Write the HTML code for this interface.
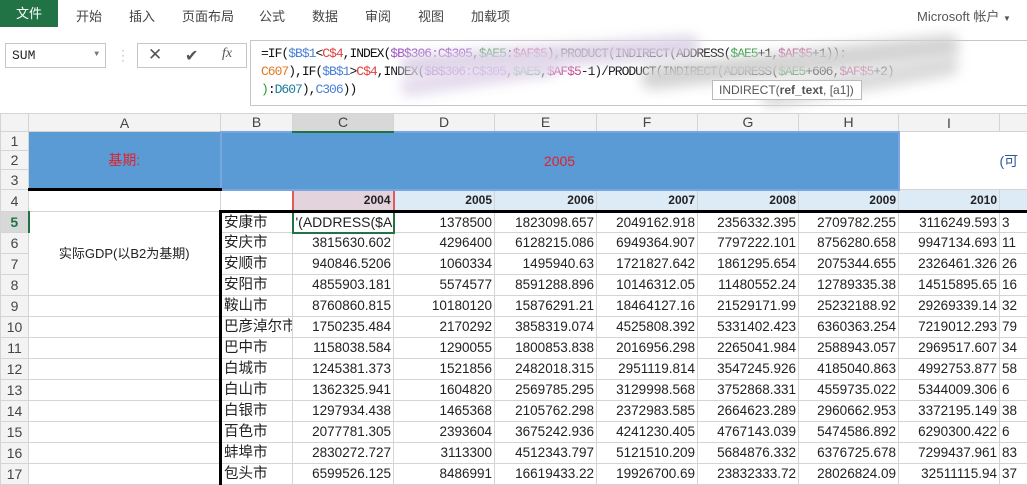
<!DOCTYPE html>
<html><head><meta charset="utf-8"><style>
*{margin:0;padding:0;box-sizing:border-box}
body{width:1027px;height:479px;overflow:hidden;background:#fff;font-family:"Liberation Sans","Noto Sans CJK SC",sans-serif;position:relative}
.tabs{position:absolute;top:0;left:0;width:1027px;height:27px;font-size:13px;color:#444}
.tabs span{position:absolute;top:6px}
.file{position:absolute;left:0;top:0;width:58px;height:27px;background:#217346;color:#fff;font-size:13px;text-align:center;line-height:27px}
.nb{position:absolute;left:5px;top:43px;width:101px;height:25px;border:1px solid #c6c6c6;font-family:"Liberation Mono",monospace;font-size:13px;padding:4px 0 0 6px;color:#222}
.btns{position:absolute;left:137px;top:43px;width:110px;height:25px;border:1px solid #c6c6c6;color:#555}
.fx{position:absolute;left:250px;top:40px;width:780px;height:66px;border:1px solid #c6c6c6;border-right:none}
.fl{position:absolute;left:261px;font-family:"Liberation Mono",monospace;font-size:13px;letter-spacing:-1px;white-space:pre;color:#111}
.b{color:#4a7fd6}.r{color:#e04040}.p{color:#9a4fc0}.g{color:#2a9a3a}.o{color:#e07a20}.m{color:#c0408a}.t{color:#1e7aa0}
.blob{position:absolute;filter:blur(6px);border-radius:20px}
table{position:absolute;left:0;top:113px;border-collapse:collapse;table-layout:fixed;width:1039px}
td{border:1px solid #d4d4d4;font-size:13.5px;line-height:18px;white-space:nowrap;overflow:hidden;text-align:right;padding:0 2px;color:#222;height:21px}
td.h{background:#f3f3f3;color:#444;text-align:center;font-size:14px;padding:0}
tr.ch td{background:#f3f3f3;height:18px;line-height:16px;text-align:center;color:#444;font-size:14px;padding:0}
td.nm{text-align:left;padding-left:2px;font-size:14.5px}
</style></head><body>
<div class="file">文件</div>
<div class="tabs">
<span style="left:76px">开始</span><span style="left:129px">插入</span><span style="left:182px">页面布局</span><span style="left:259px">公式</span><span style="left:312px">数据</span><span style="left:365px">审阅</span><span style="left:418px">视图</span><span style="left:471px">加载项</span>
<span style="left:917px;color:#555">Microsoft 帐户 <span style="font-size:8px;position:static">▼</span></span>
</div>
<div class="nb">SUM<span style="position:absolute;right:6px;top:6px;font-size:8px;color:#777">▼</span></div>
<div style="position:absolute;left:121px;top:48px;color:#aaa;font-size:12px;line-height:5px">·<br>·<br>·</div>
<div class="btns"><span style="position:absolute;left:10px;top:1px;font-size:17px">✕</span><span style="position:absolute;left:47px;top:2px;font-size:16px">✔</span><span style="position:absolute;left:84px;top:2px;font-family:'Liberation Serif',serif;font-style:italic;font-size:14px">fx</span></div>
<div class="fx"></div>
<div class="fl" style="top:46px">=IF(<span class="b">$B$1</span>&lt;<span class="r">C$4</span>,INDEX(<span class="p">$B$306:C$305</span>,<span class="g">$AE5</span>:<span class="m">$AF$5</span>),PRODUCT(INDIRECT(ADDRESS(<span class="g">$AE5</span>+1,<span class="m">$AF$5</span>+1)):</div>
<div class="fl" style="top:64px"><span class="o">C607</span>),IF(<span class="b">$B$1</span>&gt;<span class="r">C$4</span>,INDEX(<span class="p">$B$306:C$305</span>,<span class="g">$AE5</span>,<span class="m">$AF$5</span>-1)/PRODUCT(INDIRECT(ADDRESS(<span class="g">$AE5</span>+606,<span class="m">$AF$5</span>+2)</div>
<div class="fl" style="top:82px"><span class="g">)</span>:<span class="t">D607</span>),<span class="b">C306</span>))</div>
<div class="blob" style="left:400px;top:45px;width:300px;height:22px;background:rgba(220,210,230,.9);transform:rotate(-4deg)"></div>
<div class="blob" style="left:640px;top:50px;width:320px;height:24px;background:rgba(210,210,210,.95);transform:rotate(-6deg)"></div>
<div class="blob" style="left:400px;top:68px;width:160px;height:18px;background:rgba(225,215,235,.9);transform:rotate(-8deg)"></div>
<div class="blob" style="left:760px;top:70px;width:200px;height:22px;background:rgba(215,215,215,.9);transform:rotate(-10deg)"></div>
<div style="position:absolute;left:712px;top:80px;width:150px;height:20px;border:1px solid #bbb;background:#fff;font-size:12px;color:#555;padding:2px 0 0 6px">INDIRECT(<b>ref_text</b>, [a1])</div>
<table>
<colgroup><col style="width:28px"><col style="width:192px"><col style="width:72px"><col style="width:101px"><col style="width:101px"><col style="width:102px"><col style="width:101px"><col style="width:101px"><col style="width:100px"><col style="width:101px"><col style="width:40px"></colgroup>
<tr class="ch"><td></td><td>A</td><td>B</td><td style="background:#d8d8d8;border-bottom:2px solid #217346">C</td><td>D</td><td>E</td><td>F</td><td>G</td><td>H</td><td>I</td><td></td></tr>
<tr><td class="h" style="height:19px">1</td><td rowspan="3" style="background:#5b9bd5;color:#e0202a;text-align:center;border-bottom:3px solid #000;font-size:14px">基期:</td><td colspan="7" rowspan="3" style="background:#5b9bd5;color:#e0202a;text-align:center;border:2px solid #7aa6e0;font-size:14px">2005</td><td rowspan="3" colspan="2" style="color:#2a5a9a;text-align:left;padding-left:100px;font-size:14px">(可</td></tr>
<tr><td class="h" style="height:19px">2</td></tr>
<tr><td class="h" style="height:20px">3</td></tr>
<tr style="font-weight:bold"><td class="h" style="height:22px;font-weight:normal">4</td><td></td><td></td><td style="background:#e3d3dc;border:2px solid #e05a5a;font-weight:bold;font-size:12px">2004</td><td style="background:#ddebf7;font-size:12px;font-weight:bold">2005</td><td style="background:#ddebf7;font-size:12px;font-weight:bold">2006</td><td style="background:#ddebf7;font-size:12px;font-weight:bold">2007</td><td style="background:#ddebf7;font-size:12px;font-weight:bold">2008</td><td style="background:#ddebf7;font-size:12px;font-weight:bold">2009</td><td style="background:#ddebf7;font-size:12px;font-weight:bold">2010</td><td style="background:#ddebf7"></td></tr>
<tr><td class="h" style="background:#d8d8d8;color:#217346;font-weight:bold;border-right:2px solid #217346">5</td><td rowspan="4" style="text-align:center;font-size:13px">实际GDP(以B2为基期)</td><td class="nm" style="border-left:3px solid #000;border-top:3px solid #000">安康市</td><td style="border:2px solid #217346;text-align:left;border-top:3px solid #000;font-size:14px">'(ADDRESS($A</td><td style="border-top:3px solid #000">1378500</td><td style="border-top:3px solid #000">1823098.657</td><td style="border-top:3px solid #000">2049162.918</td><td style="border-top:3px solid #000">2356332.395</td><td style="border-top:3px solid #000">2709782.255</td><td style="border-top:3px solid #000">3116249.593</td><td style="border-top:3px solid #000;text-align:left">3</td></tr>
<tr><td class="h">6</td><td class="nm" style="border-left:3px solid #000">安庆市</td><td>3815630.602</td><td>4296400</td><td>6128215.086</td><td>6949364.907</td><td>7797222.101</td><td>8756280.658</td><td>9947134.693</td><td style="text-align:left">11</td></tr>
<tr><td class="h">7</td><td class="nm" style="border-left:3px solid #000">安顺市</td><td>940846.5206</td><td>1060334</td><td>1495940.63</td><td>1721827.642</td><td>1861295.654</td><td>2075344.655</td><td>2326461.326</td><td style="text-align:left">26</td></tr>
<tr><td class="h">8</td><td class="nm" style="border-left:3px solid #000">安阳市</td><td>4855903.181</td><td>5574577</td><td>8591288.896</td><td>10146312.05</td><td>11480552.24</td><td>12789335.38</td><td>14515895.65</td><td style="text-align:left">16</td></tr>
<tr><td class="h">9</td><td></td><td class="nm" style="border-left:3px solid #000">鞍山市</td><td>8760860.815</td><td>10180120</td><td>15876291.21</td><td>18464127.16</td><td>21529171.99</td><td>25232188.92</td><td>29269339.14</td><td style="text-align:left">32</td></tr>
<tr><td class="h">10</td><td></td><td class="nm" style="border-left:3px solid #000">巴彦淖尔市</td><td>1750235.484</td><td>2170292</td><td>3858319.074</td><td>4525808.392</td><td>5331402.423</td><td>6360363.254</td><td>7219012.293</td><td style="text-align:left">79</td></tr>
<tr><td class="h">11</td><td></td><td class="nm" style="border-left:3px solid #000">巴中市</td><td>1158038.584</td><td>1290055</td><td>1800853.838</td><td>2016956.298</td><td>2265041.984</td><td>2588943.057</td><td>2969517.607</td><td style="text-align:left">34</td></tr>
<tr><td class="h">12</td><td></td><td class="nm" style="border-left:3px solid #000">白城市</td><td>1245381.373</td><td>1521856</td><td>2482018.315</td><td>2951119.814</td><td>3547245.926</td><td>4185040.863</td><td>4992753.877</td><td style="text-align:left">58</td></tr>
<tr><td class="h">13</td><td></td><td class="nm" style="border-left:3px solid #000">白山市</td><td>1362325.941</td><td>1604820</td><td>2569785.295</td><td>3129998.568</td><td>3752868.331</td><td>4559735.022</td><td>5344009.306</td><td style="text-align:left">6</td></tr>
<tr><td class="h">14</td><td></td><td class="nm" style="border-left:3px solid #000">白银市</td><td>1297934.438</td><td>1465368</td><td>2105762.298</td><td>2372983.585</td><td>2664623.289</td><td>2960662.953</td><td>3372195.149</td><td style="text-align:left">38</td></tr>
<tr><td class="h">15</td><td></td><td class="nm" style="border-left:3px solid #000">百色市</td><td>2077781.305</td><td>2393604</td><td>3675242.936</td><td>4241230.405</td><td>4767143.039</td><td>5474586.892</td><td>6290300.422</td><td style="text-align:left">6</td></tr>
<tr><td class="h">16</td><td></td><td class="nm" style="border-left:3px solid #000">蚌埠市</td><td>2830272.727</td><td>3113300</td><td>4512343.797</td><td>5121510.209</td><td>5684876.332</td><td>6376725.678</td><td>7299437.961</td><td style="text-align:left">83</td></tr>
<tr><td class="h">17</td><td></td><td class="nm" style="border-left:3px solid #000">包头市</td><td>6599526.125</td><td>8486991</td><td>16619433.22</td><td>19926700.69</td><td>23832333.72</td><td>28026824.09</td><td>32511115.94</td><td style="text-align:left">37</td></tr>
</table>
</body></html>
